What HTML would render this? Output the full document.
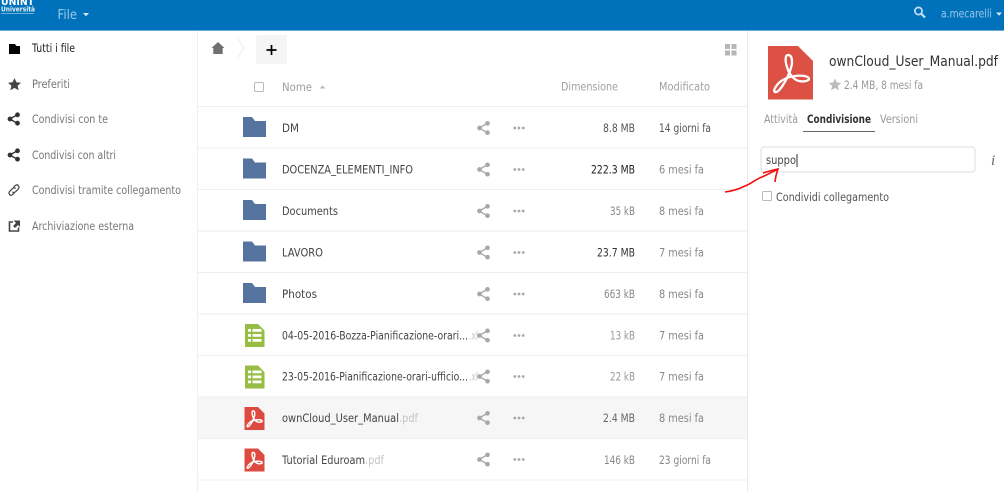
<!DOCTYPE html>
<html><head><meta charset="utf-8"><title>Files</title>
<style>
html,body{margin:0;padding:0;background:#fff;width:1004px;height:492px;overflow:hidden}
svg{display:block;font-family:"DejaVu Sans","Liberation Sans",sans-serif;font-size:11.3px}
</style></head><body>
<svg width="1004" height="492" viewBox="0 0 1004 492" xmlns="http://www.w3.org/2000/svg">
<defs>
<filter id="b" x="-2%" y="-2%" width="104%" height="104%"><feGaussianBlur stdDeviation="0.38"/></filter>
<g id="folder"><path d="M243 117h9l3 4h11v16h-23z" fill="#55739f"/></g>
<g id="share" fill="none" stroke="#a8a8a8" stroke-width="1.300"><path d="M488 123l-9 5 9 5"/><circle cx="487.500" cy="123.300" r="1.700" fill="#a8a8a8"/><circle cx="479.500" cy="128" r="1.700" fill="#a8a8a8"/><circle cx="487.500" cy="132.700" r="1.700" fill="#a8a8a8"/></g>
<g id="dots" fill="#a8a8a8"><circle cx="514.800" cy="128" r="1.400"/><circle cx="519" cy="128" r="1.400"/><circle cx="523.200" cy="128" r="1.400"/></g>
<g id="xls"><path d="M245 324h13l6.500 6.500V347h-19.500z" fill="#97bd45"/><path d="M248 329h3v2.800h-3zM252.500 329h9v2.800h-9zM248 334h3v2.800h-3zM252.500 334h9v2.800h-9zM248 339h3v2.800h-3zM252.500 339h9v2.800h-9z" fill="#fff"/></g>
<path id="acro" d="M788 55c-3 0-3 6-1 12 2 7 7 13 12 14 4 1 10 0 10-2 0-3-8-4-14-3-7 1-14 4-18 9-2 3-4 6-2 7 3 1 7-5 11-12 3-6 6-13 6-18 0-4-1-7-4-7z" fill="none" stroke="#fff"/>
<g id="pdf"><path d="M244.500 407h13.500l6.500 6.500V430h-20z" fill="#dd4c40"/><use href="#acro" transform="translate(244.500 407) scale(.43) translate(-768 -46)" stroke-width="3.400"/></g>
<g id="navshare" fill="none" stroke="#333" stroke-width="1.400"><path d="M18 114.500l-8.500 4.500 8.500 4.500"/><circle cx="17.500" cy="114.800" r="1.700" fill="#333"/><circle cx="10" cy="119" r="1.700" fill="#333"/><circle cx="17.500" cy="123.200" r="1.700" fill="#333"/></g>
</defs>
<g filter="url(#b)">
<rect width="1004" height="492" fill="#fff"/>
<rect width="1004" height="30" fill="#0072bb"/>
<rect y="30" width="1004" height="1" fill="#62add9"/>
<text x="1" y="5" fill="#fff" font-weight="bold" font-size="9.500px" textLength="33" lengthAdjust="spacingAndGlyphs">UNINT</text>
<text x="1" y="11.500" fill="#e4f0f8" font-weight="bold" font-size="7px" textLength="34" lengthAdjust="spacingAndGlyphs">Università</text>
<rect x="1" y="13" width="33" height="1" fill="#6db0da"/>
<text x="57.500" y="19" fill="#9cc8e6" font-size="13.500px" textLength="19.500" lengthAdjust="spacingAndGlyphs">File</text>
<path d="M83 13h6l-3 3.200z" fill="#d5e8f4"/>
<circle cx="918.500" cy="11" r="3.600" fill="none" stroke="#c9e0f0" stroke-width="1.700"/><path d="M921 13.500l4 4" stroke="#c9e0f0" stroke-width="2.200"/>
<text x="941" y="17.500" fill="#9cc8e6" textLength="51" lengthAdjust="spacingAndGlyphs">a.mecarelli</text>
<path d="M996 12.500h6l-3 3.200z" fill="#d5e8f4"/>
<rect x="197" y="31" width="1" height="461" fill="#f0f0f0"/>
<rect x="747" y="31" width="1" height="461" fill="#eaeaea"/>
<path d="M9 44h6l1.500 2H20v8H9z" fill="#000"/>
<text x="32" y="52" fill="#222" textLength="43" lengthAdjust="spacingAndGlyphs">Tutti i file</text>
<path d="M14.500 78l1.900 4.200 4.600.5-3.400 3 1 4.500-4.100-2.300-4.100 2.300 1-4.500-3.400-3 4.600-.5z" fill="#444"/>
<text x="32" y="88" fill="#777" textLength="38" lengthAdjust="spacingAndGlyphs">Preferiti</text>
<use href="#navshare"/>
<text x="32" y="123" fill="#777" textLength="76" lengthAdjust="spacingAndGlyphs">Condivisi con te</text>
<use href="#navshare" y="36"/>
<text x="32" y="159" fill="#777" textLength="84" lengthAdjust="spacingAndGlyphs">Condivisi con altri</text>
<path d="M10.500 195.500l-.8-.8c-1-1.200-.8-2.500.2-3.500l2.500-2.500c1-1 2.300-1 3.200-.1M17.500 185l.8.8c1 1.100.8 2.400-.2 3.400l-2.500 2.500c-1 1-2.300 1-3.200.1M14.500 192.500l-1.500 1.700c-1 1-2.300 1.400-3.300.5M13.500 187.500l1.500-1.700c1-1 2.300-1.400 3.300-.5" fill="none" stroke="#444" stroke-width="1.200"/>
<text x="32" y="194" fill="#777" textLength="149" lengthAdjust="spacingAndGlyphs">Condivisi tramite collegamento</text>
<path d="M13 222H9.500v9h9v-3.500" fill="none" stroke="#444" stroke-width="1.600"/><path d="M13.500 220.500H20V227l-2-2-3 3-2-2 3-3z" fill="#444"/>
<text x="32" y="230" fill="#777" textLength="102" lengthAdjust="spacingAndGlyphs">Archiviazione esterna</text>
<path d="M218 42l6.500 6h-1.800v6h-9.400v-6h-1.800z" fill="#707070"/>
<path d="M237 36l6.500 12-6.500 12" fill="none" stroke="#eee" stroke-width="1"/>
<rect x="256" y="35" width="31" height="29" rx="2" fill="#f5f5f5"/>
<path d="M271.500 45v10M266.500 50h10" stroke="#000" stroke-width="1.700"/>
<path d="M725 44h5v5h-5zM731.500 44h5v5h-5zM725 50.500h5v5h-5zM731.500 50.500h5v5h-5z" fill="#b5b5b5"/>
<rect x="254.500" y="82.500" width="9" height="9" rx="1" fill="#fff" stroke="#bbb"/>
<text x="282" y="91" fill="#a0a0a0" textLength="30" lengthAdjust="spacingAndGlyphs">Nome</text>
<path d="M319.500 88.500h6l-3-3z" fill="#bbb"/>
<text x="561" y="90.500" fill="#a0a0a0" textLength="57" lengthAdjust="spacingAndGlyphs">Dimensione</text>
<text x="659" y="90.500" fill="#a0a0a0" textLength="51" lengthAdjust="spacingAndGlyphs">Modificato</text>
<rect x="198" y="397" width="549" height="41" fill="#f6f6f6"/>
<g fill="#eee">
<rect x="198" y="106" width="549" height="1"/><rect x="198" y="147.500" width="549" height="1"/><rect x="198" y="189" width="549" height="1"/><rect x="198" y="230.500" width="549" height="1"/><rect x="198" y="272" width="549" height="1"/><rect x="198" y="313.500" width="549" height="1"/><rect x="198" y="355" width="549" height="1"/><rect x="198" y="396.500" width="549" height="1"/><rect x="198" y="438" width="549" height="1"/><rect x="198" y="479.500" width="549" height="1"/>
</g>
<use href="#folder"/><use href="#folder" y="41.500"/><use href="#folder" y="83"/><use href="#folder" y="124.500"/><use href="#folder" y="166"/>
<use href="#xls"/><use href="#xls" y="41.500"/><use href="#pdf"/><use href="#pdf" y="41.500"/>
<use href="#share"/><use href="#share" y="41.500"/><use href="#share" y="83"/><use href="#share" y="124.500"/><use href="#share" y="166"/><use href="#share" y="207.500"/><use href="#share" y="248.500"/><use href="#share" y="290"/><use href="#share" y="331.500"/>
<use href="#dots"/><use href="#dots" y="41.500"/><use href="#dots" y="83"/><use href="#dots" y="124.500"/><use href="#dots" y="166"/><use href="#dots" y="207.500"/><use href="#dots" y="248.500"/><use href="#dots" y="290"/><use href="#dots" y="331.500"/>
<g fill="#444">
<text x="282" y="132" textLength="17" lengthAdjust="spacingAndGlyphs">DM</text>
<text x="282" y="173.500" textLength="131" lengthAdjust="spacingAndGlyphs">DOCENZA_ELEMENTI_INFO</text>
<text x="282" y="215" textLength="56" lengthAdjust="spacingAndGlyphs">Documents</text>
<text x="282" y="256.500" textLength="41" lengthAdjust="spacingAndGlyphs">LAVORO</text>
<text x="282" y="298" textLength="35" lengthAdjust="spacingAndGlyphs">Photos</text>
<text x="282" y="339.500" textLength="186" lengthAdjust="spacingAndGlyphs">04-05-2016-Bozza-Pianificazione-orari...</text>
<text x="282" y="380.500" textLength="186" lengthAdjust="spacingAndGlyphs">23-05-2016-Pianificazione-orari-ufficio...</text>
<text x="282" y="422" textLength="117" lengthAdjust="spacingAndGlyphs">ownCloud_User_Manual</text>
<text x="282" y="464" textLength="83" lengthAdjust="spacingAndGlyphs">Tutorial Eduroam</text>
</g>
<g fill="#c4c4c4">
<text x="469" y="339.500" textLength="9" lengthAdjust="spacingAndGlyphs">.xl</text>
<text x="469" y="380.500" textLength="9" lengthAdjust="spacingAndGlyphs">.xl</text>
<text x="399" y="422" textLength="19" lengthAdjust="spacingAndGlyphs">.pdf</text>
<text x="365" y="464" textLength="19" lengthAdjust="spacingAndGlyphs">.pdf</text>
</g>
<g text-anchor="end">
<text x="635" y="132" fill="#555" textLength="32" lengthAdjust="spacingAndGlyphs">8.8 MB</text>
<text x="635" y="173.500" fill="#222" textLength="44" lengthAdjust="spacingAndGlyphs">222.3 MB</text>
<text x="635" y="215" fill="#888" textLength="25" lengthAdjust="spacingAndGlyphs">35 kB</text>
<text x="635" y="256.500" fill="#333" textLength="38" lengthAdjust="spacingAndGlyphs">23.7 MB</text>
<text x="635" y="298" fill="#888" textLength="31" lengthAdjust="spacingAndGlyphs">663 kB</text>
<text x="635" y="339.500" fill="#999" textLength="25" lengthAdjust="spacingAndGlyphs">13 kB</text>
<text x="635" y="380.500" fill="#999" textLength="25" lengthAdjust="spacingAndGlyphs">22 kB</text>
<text x="635" y="422" fill="#666" textLength="32" lengthAdjust="spacingAndGlyphs">2.4 MB</text>
<text x="635" y="464" fill="#888" textLength="31" lengthAdjust="spacingAndGlyphs">146 kB</text>
</g>
<text x="659" y="132" fill="#555" textLength="52" lengthAdjust="spacingAndGlyphs">14 giorni fa</text>
<text x="659" y="173.500" fill="#888" textLength="45" lengthAdjust="spacingAndGlyphs">6 mesi fa</text>
<text x="659" y="215" fill="#888" textLength="45" lengthAdjust="spacingAndGlyphs">8 mesi fa</text>
<text x="659" y="256.500" fill="#888" textLength="45" lengthAdjust="spacingAndGlyphs">7 mesi fa</text>
<text x="659" y="298" fill="#888" textLength="45" lengthAdjust="spacingAndGlyphs">8 mesi fa</text>
<text x="659" y="339.500" fill="#888" textLength="45" lengthAdjust="spacingAndGlyphs">7 mesi fa</text>
<text x="659" y="380.500" fill="#888" textLength="45" lengthAdjust="spacingAndGlyphs">7 mesi fa</text>
<text x="659" y="422" fill="#888" textLength="45" lengthAdjust="spacingAndGlyphs">8 mesi fa</text>
<text x="659" y="464" fill="#888" textLength="52" lengthAdjust="spacingAndGlyphs">23 giorni fa</text>
<path d="M768 46h30l15 15v38.500h-45z" fill="#dd5145"/>
<use href="#acro" stroke-width="2.300"/>
<text x="829" y="66" fill="#333" font-size="14px" textLength="169" lengthAdjust="spacingAndGlyphs">ownCloud_User_Manual.pdf</text>
<path d="M835 78.500l1.800 4 4.400.5-3.300 2.900 1 4.300-3.900-2.200-3.900 2.200 1-4.300-3.300-2.900 4.400-.5z" fill="#bbb"/>
<text x="844" y="89" fill="#999" textLength="79" lengthAdjust="spacingAndGlyphs">2.4 MB, 8 mesi fa</text>
<text x="764" y="123" fill="#999" textLength="34" lengthAdjust="spacingAndGlyphs">Attività</text>
<text x="807" y="123" fill="#333" font-weight="bold" textLength="64" lengthAdjust="spacingAndGlyphs">Condivisione</text>
<text x="880" y="123" fill="#999" textLength="38" lengthAdjust="spacingAndGlyphs">Versioni</text>
<rect x="803" y="131" width="72" height="1" fill="#666"/>
<rect x="761" y="147" width="214" height="25" rx="3" fill="#fff" stroke="#ddd"/>
<text x="766" y="164" fill="#444" textLength="30" lengthAdjust="spacingAndGlyphs">suppo</text>
<rect x="796.500" y="154" width="1" height="13" fill="#333"/>
<text x="991" y="165" fill="#666" font-family="Liberation Serif" font-style="italic" font-size="15px">i</text>
<rect x="762.500" y="191.500" width="9" height="9" rx="1" fill="#fff" stroke="#bbb"/>
<text x="776" y="201" fill="#555" textLength="113" lengthAdjust="spacingAndGlyphs">Condividi collegamento</text>
<path d="M725 192c8-1 14-3 20-6 7-2.500 11-7 17-9 5-2 10-5 16-8" fill="none" stroke="#f01010" stroke-width="1.600"/>
<path d="M763 173c5-1.500 10-3 15-4-1.500 4-2.500 8.500-3 13" fill="none" stroke="#f01010" stroke-width="1.600"/>
</g>
</svg>
</body></html>
